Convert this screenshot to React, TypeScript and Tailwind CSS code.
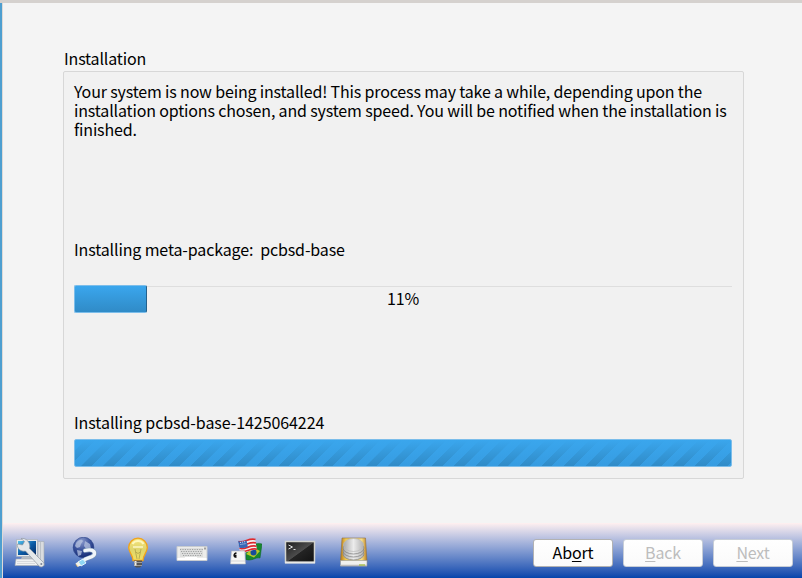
import React from "react";

const icon = "h-8 w-8 shrink-0";

function ComputerIcon() {
  return (
    <svg className={icon} viewBox="0 0 32 32">
      <defs>
        <linearGradient id="scr" x1="0" y1="0" x2="1" y2="1">
          <stop offset="0" stopColor="#54c4ee" /><stop offset="0.5" stopColor="#0b5da8" /><stop offset="1" stopColor="#062a63" />
        </linearGradient>
      </defs>
      <path d="M24 4.500h6v24h-6z" fill="#d9dcdf" stroke="#a4abb3" strokeWidth=".6" />
      <path d="M26.500 5v18" stroke="#b4bac0" strokeWidth=".8" />
      <path d="M2.500 2.500h21v17h-21z" fill="#e6e9eb" stroke="#a5acb3" strokeWidth=".6" />
      <path d="M4 4h18v14H4z" fill="url(#scr)" />
      <path d="M8 19.500h10l1 2.500H7z" fill="#b6bcc2" />
      <path d="M2 22h20l2 6.500H1z" fill="#f0f1f2" stroke="#a8adb2" strokeWidth=".6" />
      <path d="M3 24.500h18M3 26.500h18" stroke="#c6cacf" strokeWidth=".6" />
      <path d="M7 1.500 10.500 4.500 8.500 8 3.500 7c-1 4 3 8 8 7L25 29c3 2.500 6.500-.5 4.500-3.500L15.500 11.500C17 6 12.500.5 7 1.500z" fill="#e4e8ea" stroke="#929aa3" strokeWidth=".7" />
      <circle cx="27.300" cy="27" r="1" fill="#7b8494" />
    </svg>
  );
}

function NetworkIcon() {
  return (
    <svg className={icon} viewBox="0 0 32 32">
      <defs>
        <radialGradient id="globe" cx=".4" cy=".2" r=".85">
          <stop offset="0" stopColor="#8c9ccd" /><stop offset=".5" stopColor="#3a529c" /><stop offset="1" stopColor="#10276e" />
        </radialGradient>
      </defs>
      <circle cx="15.500" cy="10.500" r="10.300" fill="url(#globe)" stroke="#20377f" strokeWidth=".6" />
      <path d="M8 6c3-4 6-4 7-2l-2 3-1 3-3 1-2-2zM17 4l5 3 1 5-4 1-3-4zM9 13l5 1-1 4-3 1z" fill="#b8c4e0" opacity=".75" />
      <path d="M17 13.500c6-1.500 10 0 9.500 3.500-.5 4-8 3-11 6.500" fill="none" stroke="#7c97b5" strokeWidth="4.500" strokeLinecap="round" />
      <path d="M17 13.500c6-1.500 10 0 9.500 3.500-.5 4-8 3-11 6.500" fill="none" stroke="#f0f5f9" strokeWidth="3.300" strokeLinecap="round" />
      <path d="m15 22 3 4-5 3-3-4z" fill="#8fd6f3" stroke="#e1f5ff" strokeWidth="1" />
      <path d="m10.500 24.500 2.500 4-3.500 1.500-2-3.500z" fill="#f0f1eb" /><path d="m8 27.500 1.500 2" stroke="#d4a64d" />
    </svg>
  );
}

function BulbIcon() {
  return (
    <svg className={icon} viewBox="0 0 32 32">
      <defs>
        <linearGradient id="bulb" x1="0" y1="0" x2="0" y2="1">
          <stop offset="0" stopColor="#f6e47d" /><stop offset=".5" stopColor="#dfd56c" /><stop offset="1" stopColor="#f2df61" />
        </linearGradient>
      </defs>
      <path d="M11 23.500C11 18 6.700 15.500 6.700 10.500a9.300 9.300 0 0 1 18.600 0c0 5-4.300 7.500-4.300 13z" fill="url(#bulb)" stroke="#f2a31a" strokeWidth="1.300" />
      <path d="M10.500 7c2-4 9-4 11 0" fill="none" stroke="#fff8ba" strokeWidth="2" />
      <path d="M13 12l2 10M19 12l-2 10M13 14.500l3 2 3-2" stroke="#b9ad50" fill="none" />
      <path d="M11 10h10" stroke="#fffbd4" strokeWidth="1.300" />
      <path d="M12 23.500h8v5l-2 2h-4l-2-2z" fill="#555" />
      <path d="M13.500 24v5" stroke="#eee" strokeWidth="2" />
      <path d="M12 25.500h8M12 28.500h8" stroke="#bbb" strokeWidth=".7" />
    </svg>
  );
}

function KeyboardIcon() {
  return (
    <svg className={icon} viewBox="0 0 32 32">
      <path d="M1 9.500h30v14H1z" fill="#ececea" stroke="#c8ccd0" />
      <path d="M1.500 22h29" stroke="#fff" strokeWidth="2" />
      <path d="M4 11h23v9H4z" fill="#dddedd" />
      <path d="M4 12.500h23M5 14.500h21M6 16.500h20M7 18.500h18" stroke="#9fa1a1" strokeWidth="1" strokeDasharray="1.200 1.200" />
      <path d="M9 20.500h12" stroke="#fff" strokeWidth="1.300" />
      <path d="M29 10.500v2" stroke="#555" />
    </svg>
  );
}

function LocaleIcon() {
  return (
    <svg className={icon} viewBox="0 0 32 32">
      <path d="M16 8.500c5 2 10-4 16-1.500l-2 14c-5-1-8 3.500-14 1.500z" fill="#17882e" stroke="#09611d" strokeWidth=".5" />
      <path d="m16 17 7.500-6.500 6.500 3.500-6 6.500z" fill="#b9c92b" /><circle cx="23.500" cy="15.500" r="3" fill="#174c9b" />
      <path d="M8 4c6 2 10-4 17-2l2 11c-6-1.500-11 5-17 2z" fill="#f5f3f3" />
      <path d="M8.500 4.500c6 2 10-4 17-2M9 8c6 2 10-4 17-2M9.500 11.300c6 2 10-4 17-2M10 14.300c6 2 11-4 17-2" fill="none" stroke="#dc292f" strokeWidth="1.700" />
      <path d="M8 4c3 1 5.500.4 8.500-.8l1.300 6.500c-3 1.300-5.500 1.800-8.500 1z" fill="#3867b5" />
      <path d="M10 5.500l6-1M10.500 7.500l6-1" stroke="#fff" strokeWidth=".8" strokeDasharray="1 1" />
      <path d="M1.500 14h13.300l.3 8 .4 5H.500l.3-5z" fill="#f6f6f4" stroke="#b7bbc0" strokeWidth=".6" />
      <path d="M1 24h14" stroke="#d6d6d6" /><path d="M6.500 16c-3 .5-3.500 4.500 0 4M3.500 18.500h3" fill="none" stroke="#111" strokeWidth="1.400" />
    </svg>
  );
}

function TerminalIcon() {
  return (
    <svg className={icon} viewBox="0 0 32 32">
      <defs>
        <linearGradient id="term" x1="0" y1="0" x2="1" y2="1">
          <stop offset="0" stopColor="#1a1a1a" /><stop offset=".5" stopColor="#4c4c4c" /><stop offset=".52" stopColor="#242424" /><stop offset="1" stopColor="#111" />
        </linearGradient>
      </defs>
      <path d="M1.500 4.500h29v21h-29z" fill="url(#term)" stroke="#d3d4cf" strokeWidth="1.500" />
      <path d="M1 25.500h30" stroke="#e9e9e6" strokeWidth="2" />
      <path d="m4.500 8 4 2-4 2M9.500 12.500h2" fill="none" stroke="#ddd" />
    </svg>
  );
}

function DiskIcon() {
  return (
    <svg className={icon} viewBox="0 0 32 32">
      <defs>
        <linearGradient id="gold"><stop stopColor="#b97a18" /><stop offset=".2" stopColor="#f1cb54" /><stop offset=".8" stopColor="#f6df8b" /><stop offset="1" stopColor="#bc7c1b" /></linearGradient>
        <linearGradient id="disk"><stop stopColor="#a8a8a8" /><stop offset=".5" stopColor="#ececec" /><stop offset="1" stopColor="#b2b2b2" /></linearGradient>
      </defs>
      <path d="M4 1h23.500l1.500 24H2.500z" fill="url(#gold)" stroke="#8d7147" strokeWidth=".6" />
      {[17, 14, 11].map((y) => <ellipse key={y} cx="15.500" cy={y} rx="10.500" ry="6" fill="url(#disk)" stroke="#878787" strokeWidth=".8" />)}
      <ellipse cx="15.500" cy="8" rx="10" ry="6.500" fill="url(#disk)" stroke="#b9b9b9" strokeWidth=".7" />
      <path d="M2.500 23.500h26.500v5.500H2.500z" fill="#f0f0ee" stroke="#94989a" strokeWidth=".6" /><path d="M2.500 28.500h26.500" stroke="#bbb" strokeWidth="1.500" />
      <path d="M21 28h6" stroke="#a5bf43" strokeWidth="1.300" />
    </svg>
  );
}

function NavButton({ before = "", letter, after, disabled = false }: { before?: string; letter: string; after: string; disabled?: boolean }) {
  return (
    <button
      disabled={disabled}
      className={`flex h-7 w-20 items-center justify-center rounded-[3px] border bg-gradient-to-b from-white to-[#fafafa] pb-[2px] text-[16px] leading-none ${disabled ? "border-[#c7cdd6] text-[#bdbdbd]" : "border-[#b2b2b2] text-black"}`}
    >
      <span className="whitespace-pre">{before}<span className="underline decoration-1 underline-offset-2">{letter}</span>{after}</span>
    </button>
  );
}

export default function App() {
  return (
    <div className="flex h-[578px] w-[802px] flex-col overflow-hidden border-t-[3px] border-[#d5d1ce] bg-[#f4f4f4] font-['Noto_Sans_CJK_SC',sans-serif] text-[16px] leading-[19px] tracking-[-0.16px] text-black">
      <div className="flex min-h-0 flex-1 border-l-2 border-[#4e9fd0]">
        <div className="flex min-w-0 flex-1 flex-col border-l border-[#dedad7]">
          <main className="flex min-w-0 flex-1 flex-col pt-[46px] pr-[58px] pl-[60px]">
            <h1 className="h-[22px] pl-px whitespace-nowrap">Installation</h1>
            <section className="flex h-[408px] flex-col rounded-[2px] border border-[#d7d7d7] bg-[#f1f1f1] pt-[10px] pr-[11px] pl-[10px]">
              <p className="h-[158px] whitespace-nowrap">
                Your system is now being installed! This process may take a while, depending upon the<br />
                installation options chosen, and system speed. You will be notified when the installation is<br />
                finished.
              </p>
              <p className="h-[45px] tracking-[-0.13px] whitespace-pre">Installing meta-package:  pcbsd-base</p>
              <div className="grid h-7 items-stretch">
                <div className="col-start-1 row-start-1 mt-px border-t border-[#dedede]" />
                <div className="col-start-1 row-start-1 w-[73px] rounded-[2px] border border-[#7bbdea] border-r-[#24618c] bg-gradient-to-b from-[#3aa6ed] to-[#308bc7]" />
                <div className="col-start-1 row-start-1 self-center pb-px text-center">11%</div>
              </div>
              <p className="mt-[100px] h-[26px] tracking-[-0.07px] whitespace-nowrap">Installing pcbsd-base-1425064224</p>
              <div className="h-7 rounded-[2px] border border-[#7bbdea] bg-[linear-gradient(to_bottom,#3aa6ed_0%,#3aa6ed00_100%),repeating-linear-gradient(135deg,#369ce1_0px,#369ce1_7px,#308bc7_7.3px,#308bc7_14.400px,#369ce1_14.700px,#369ce1_15.500px)]" />
            </section>
          </main>
          <footer className="flex h-[55px] items-center justify-between bg-gradient-to-b from-[#fff0f0] to-[#0344ab] pt-[5px] pr-[9px] pl-[11px]">
            <div className="flex gap-[22px]">
              <ComputerIcon /><NetworkIcon /><BulbIcon /><KeyboardIcon /><LocaleIcon /><TerminalIcon /><DiskIcon />
            </div>
            <div className="flex gap-[10px]">
              <NavButton before="Ab" letter="o" after="rt" />
              <NavButton letter="B" after="ack" disabled />
              <NavButton letter="N" after="ext" disabled />
            </div>
          </footer>
        </div>
      </div>
    </div>
  );
}
